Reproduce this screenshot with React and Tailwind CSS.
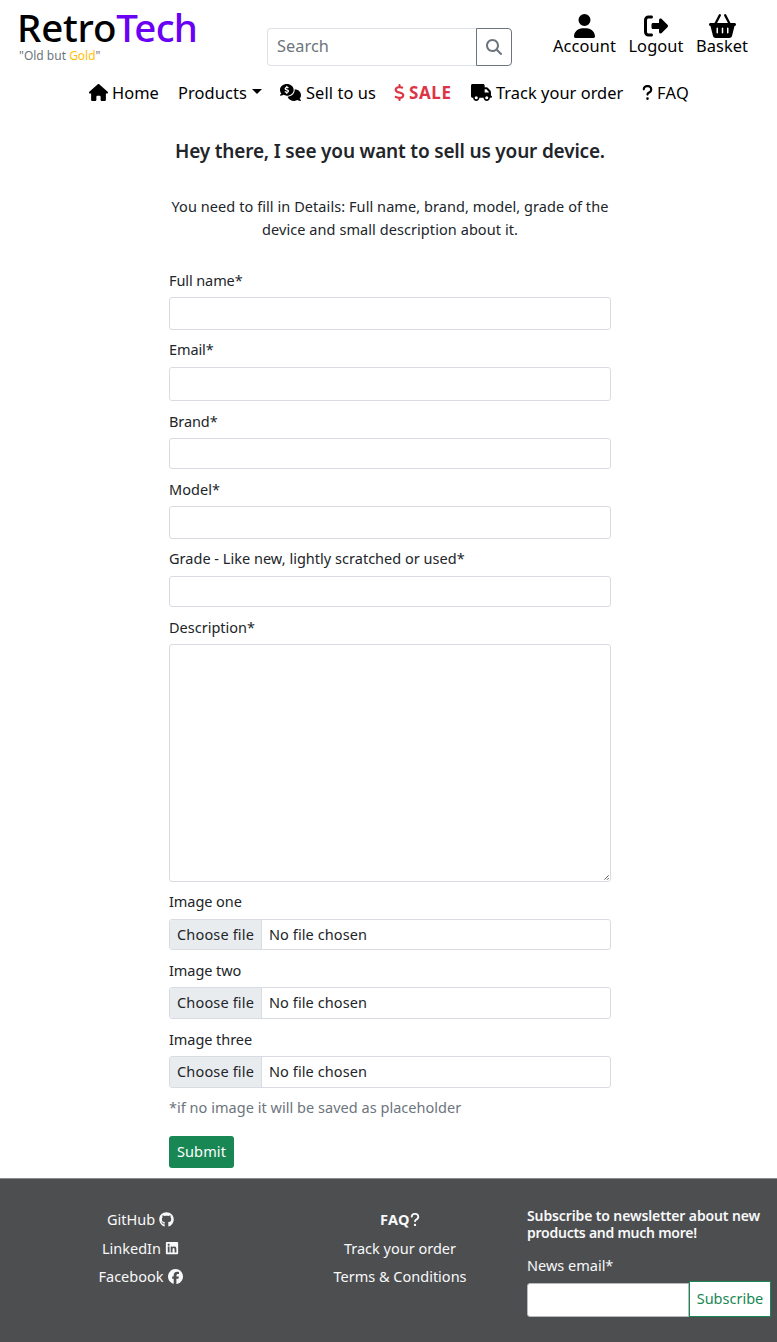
import React from "react";
import {
  FaUser,
  FaRightFromBracket,
  FaBasketShopping,
  FaHouse,
  FaCommentsDollar,
  FaDollarSign,
  FaTruck,
  FaQuestion,
  FaMagnifyingGlass,
  FaGithub,
  FaLinkedin,
  FaFacebook,
} from "react-icons/fa6";

const fields = [
  { label: "Full name*", wrap: "gap-[5px]", box: "h-[33px]", tracking: "tracking-[-0.1px]" },
  { label: "Email*", wrap: "mt-2 gap-[6px]", box: "h-[34px]", tracking: "tracking-[-0.1px]" },
  { label: "Brand*", wrap: "mt-[9px] gap-[5px]", box: "h-[31px]", tracking: "tracking-[-0.1px]" },
  { label: "Model*", wrap: "mt-[9px] gap-[5px]", box: "h-[33px]", tracking: "tracking-[0.04px]" },
  { label: "Grade - Like new, lightly scratched or used*", wrap: "mt-2 gap-[6px]", box: "h-[31px]", tracking: "tracking-[0.02px]" },
];

const images = [
  { label: "Image one", wrap: "mt-2 gap-[6px]", box: "h-[31px]" },
  { label: "Image two", wrap: "mt-[9px] gap-[5px]", box: "h-[32px] leading-[21px]" },
  { label: "Image three", wrap: "mt-[9px] gap-[5px]", box: "h-[32px] leading-[21px]" },
];

function Header() {
  return (
    <header className="h-[112px] text-black">
      <div className="flex h-[81px]">
        <div className="w-[248px] pt-[4px] pl-[17px]">
          <div className="h-[46px] text-[38.5px] leading-[46px] font-medium whitespace-nowrap">
            <span className="tracking-[-0.2px]">Retro</span>
            <span className="tracking-[-0.8px] text-[#6a00f4]">Tech</span>
          </div>
          <div className="mt-[-3px] ml-[2px] h-[18px] text-xs leading-[18px] text-[#6c757d]">
            "Old but <span className="text-[#ffc107]">Gold</span>"
          </div>
        </div>
        <div className="mt-[28px] ml-[19px] flex h-[38px] w-[245px]">
          <input
            placeholder="Search"
            className="w-[209px] rounded-l border border-r-0 border-[#dee2e6] px-[9px] pb-[2px] text-[16.3px] tracking-[0.08px] outline-none placeholder:text-[#6c757d]"
          />
          <button className="flex w-9 items-center justify-center rounded-r border border-[#6c757d] pb-px text-[#6c757d]">
            <FaMagnifyingGlass className="size-4" />
          </button>
        </div>
        <div className="mt-[14px] ml-[41px] flex gap-3 text-[16.4px] leading-6 tracking-[0.1px]">
          <a className="flex w-[63px] flex-col items-center">
            <FaUser className="h-6 w-[21px] shrink-0" />
            <span className="mt-[-4px]">Account</span>
          </a>
          <a className="flex w-14 flex-col items-center">
            <FaRightFromBracket className="size-6 shrink-0" />
            <span className="mt-[-4px]">Logout</span>
          </a>
          <a className="flex w-[52px] flex-col items-center">
            <FaBasketShopping className="h-6 w-[27px] shrink-0" />
            <span className="mt-[-4px]">Basket</span>
          </a>
        </div>
      </div>
      <nav className="flex h-6 items-center pl-[89px] text-[16.4px] leading-6 tracking-[0.04px] whitespace-nowrap">
        <a className="flex w-[89px] items-center gap-[4px]">
          <FaHouse className="mb-px h-[17px] w-[19px]" />
          <span>Home</span>
        </a>
        <a className="flex w-[102px] items-center gap-[5px]">
          <span className="tracking-[0.1px]">Products</span>
          <span className="mb-[3px] border-x-[5px] border-t-[5px] border-x-transparent border-t-black" />
        </a>
        <a className="flex w-[114px] items-center gap-[5px]">
          <FaCommentsDollar className="mb-px h-[17px] w-[21px]" />
          <span className="tracking-[0.1px]">Sell to us</span>
        </a>
        <a className="flex w-[77px] items-center gap-[4px] font-bold text-[#dc3545]">
          <FaDollarSign className="mb-px h-[17px] w-[11px]" />
          <span className="text-[17px] tracking-[0.6px]">SALE</span>
        </a>
        <a className="flex w-[171px] items-center gap-[4px]">
          <FaTruck className="mb-px h-[17px] w-[21px]" />
          <span>Track your order</span>
        </a>
        <a className="flex items-center gap-[4px]">
          <FaQuestion className="mb-px h-[17px] w-[11px]" />
          <span className="tracking-[0.4px]">FAQ</span>
        </a>
      </nav>
    </header>
  );
}

function SellForm() {
  return (
    <main className="ml-[169px] h-[1066px] w-[442px] pt-[26px] text-[14.5px] leading-[23px] text-[#212529]">
      <h1 className="text-center text-[19px] leading-[26px] font-semibold tracking-[-0.18px] whitespace-nowrap">
        Hey there, I see you want to sell us your device.
      </h1>
      <p className="mt-[31px] text-center tracking-[0.07px] whitespace-nowrap">
        You need to fill in Details: Full name, brand, model, grade of the
        <br />
        device and small description about it.
      </p>
      <form className="mt-[28px]">
        {fields.map((f) => (
          <div key={f.label} className={`flex flex-col ${f.wrap}`}>
            <label className={`h-[23px] ${f.tracking}`}>{f.label}</label>
            <input className={`w-full rounded-[3px] border border-[#d8dce2] ${f.box}`} />
          </div>
        ))}
        <div className="mt-[9px] flex flex-col gap-[5px]">
          <label className="h-[23px]">Description*</label>
          <div className="relative h-[238px]">
            <textarea className="block h-full w-full resize-none rounded-[3px] border border-[#d8dce2]" />
            <svg viewBox="0 0 5 5" className="absolute right-[2px] bottom-[2px] size-[5px]" stroke="#555" strokeWidth="0.9">
              <path d="M0.3 4.7L4.7 0.3M3 4.8L4.8 3" />
            </svg>
          </div>
        </div>
        {images.map((f) => (
          <div key={f.label} className={`flex flex-col ${f.wrap}`}>
            <label className="h-[23px] leading-[23px] tracking-[-0.06px]">{f.label}</label>
            <div className={`flex w-full items-start overflow-hidden rounded-[3px] border border-[#d8dce2] ${f.box}`}>
              <span className="flex h-full w-[92px] items-start border-r border-[#d8dce2] bg-[#e9ecef] pt-[3px] pl-[7px] leading-[23px] tracking-[0.16px]">
                Choose file
              </span>
              <span className="pt-[3px] pl-[7px] leading-[23px] tracking-[0.09px]">No file chosen</span>
            </div>
          </div>
        ))}
        <p className="mt-2 h-[23px] tracking-[0.03px] text-[#6c757d]">*if no image it will be saved as placeholder</p>
        <button
          type="button"
          className="mt-[17px] block h-8 w-[65px] rounded-[3px] bg-[#198754] pb-px tracking-[0.1px] text-white"
        >
          Submit
        </button>
      </form>
    </main>
  );
}

function Footer() {
  return (
    <footer className="flex h-[164px] border-t border-[#8a8b8c] bg-[#4d4e50] text-[14.5px] text-[#f8f9fa]">
      <div className="flex w-[281px] flex-col items-center pt-[26px] leading-[28.6px]">
        <a className="flex items-center gap-1">
          GitHub <FaGithub className="size-[15px]" />
        </a>
        <a className="flex items-center gap-1">
          LinkedIn <FaLinkedin className="size-[14px]" />
        </a>
        <a className="flex items-center gap-1">
          Facebook <FaFacebook className="size-[15px]" />
        </a>
      </div>
      <div className="flex w-[238px] flex-col items-center pt-[26px] leading-[28.6px]">
        <a className="flex items-center font-bold">
          <span className="tracking-[0.3px]">FAQ</span>
          <FaQuestion className="h-[15px] w-[10px]" />
        </a>
        <a>Track your order</a>
        <a>Terms &amp; Conditions</a>
      </div>
      <div className="ml-[8px] pt-[28px]">
        <h2 className="text-sm leading-[17px] font-semibold tracking-[-0.12px] whitespace-nowrap">
          Subscribe to newsletter about new
          <br />
          <span className="tracking-[-0.25px]">products and much more!</span>
        </h2>
        <div className="mt-[13px] h-[23px] leading-[23px]">News email*</div>
        <div className="mt-[4px] flex h-9 items-center">
          <input className="mt-px h-[34px] w-[162px] rounded-l-[3px] border border-[#b9bcbf] bg-white" />
          <button className="h-9 w-[82px] border border-[#198754] bg-white text-[#198754]">Subscribe</button>
        </div>
      </div>
    </footer>
  );
}

export default function App() {
  return (
    <div className="h-[1342px] w-[777px] overflow-hidden bg-white font-['Noto_Sans',sans-serif]">
      <Header />
      <SellForm />
      <Footer />
    </div>
  );
}
